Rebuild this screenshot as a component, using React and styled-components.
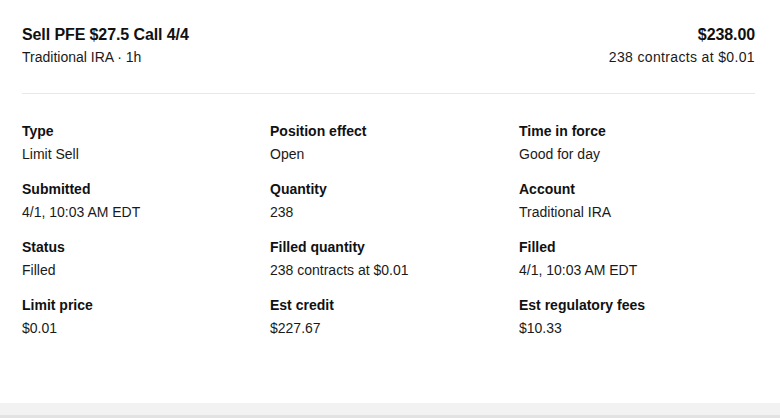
import React from "react";
import styled, { createGlobalStyle } from "styled-components";

const Global = createGlobalStyle`
  html, body { margin: 0; padding: 0; background: #fff; }
  body { font-family: "Liberation Sans", Arial, sans-serif; color: #111; -webkit-font-smoothing: antialiased; }
`;

const Page = styled.div`
  width: 780px;
  height: 418px;
  display: flex;
  flex-direction: column;
  overflow: hidden;
`;

const Card = styled.div`
  flex: 1;
  padding: 0 25px 0 22px;
`;

const Header = styled.div`
  display: flex;
  justify-content: space-between;
  align-items: flex-start;
  padding-top: 25px;
  padding-bottom: 27px;
  border-bottom: 1px solid #e8e8e8;
`;

const HeadCol = styled.div`
  display: flex;
  flex-direction: column;
  gap: 5px;
  align-items: ${(p) => (p.$right ? "flex-end" : "flex-start")};
`;

const Title = styled.div`
  font-size: 16px;
  font-weight: 700;
  line-height: 19px;
  letter-spacing: -0.1px;
`;

const Sub = styled.div`
  font-size: 14px;
  line-height: 17px;
  color: #1a1a1a;
  letter-spacing: ${(p) => (p.$num ? "0.35px" : "0")};
`;

const Grid = styled.div`
  display: grid;
  grid-template-columns: 248px 249px 1fr;
  row-gap: 18px;
  padding-top: 29px;
`;

const Field = styled.div`
  display: flex;
  flex-direction: column;
  gap: 6px;
`;

const Label = styled.div`
  font-size: 14px;
  font-weight: 700;
  line-height: 17px;
`;

const Value = styled.div`
  font-size: 14px;
  line-height: 17px;
  color: #1a1a1a;
`;

const Footer = styled.div`
  height: 12px;
  background: #f2f2f2;
  border-bottom: 3px solid #e2e2e2;
`;

const fields = [
  ["Type", "Limit Sell"],
  ["Position effect", "Open"],
  ["Time in force", "Good for day"],
  ["Submitted", "4/1, 10:03 AM EDT"],
  ["Quantity", "238"],
  ["Account", "Traditional IRA"],
  ["Status", "Filled"],
  ["Filled quantity", "238 contracts at $0.01"],
  ["Filled", "4/1, 10:03 AM EDT"],
  ["Limit price", "$0.01"],
  ["Est credit", "$227.67"],
  ["Est regulatory fees", "$10.33"],
];

export default function App() {
  return (
    <Page>
      <Global />
      <Card>
        <Header>
          <HeadCol>
            <Title>Sell PFE $27.5 Call 4/4</Title>
            <Sub>Traditional IRA · 1h</Sub>
          </HeadCol>
          <HeadCol $right>
            <Title>$238.00</Title>
            <Sub $num>238 contracts at $0.01</Sub>
          </HeadCol>
        </Header>
        <Grid>
          {fields.map(([l, v]) => (
            <Field key={l}>
              <Label>{l}</Label>
              <Value>{v}</Value>
            </Field>
          ))}
        </Grid>
      </Card>
      <Footer />
    </Page>
  );
}
